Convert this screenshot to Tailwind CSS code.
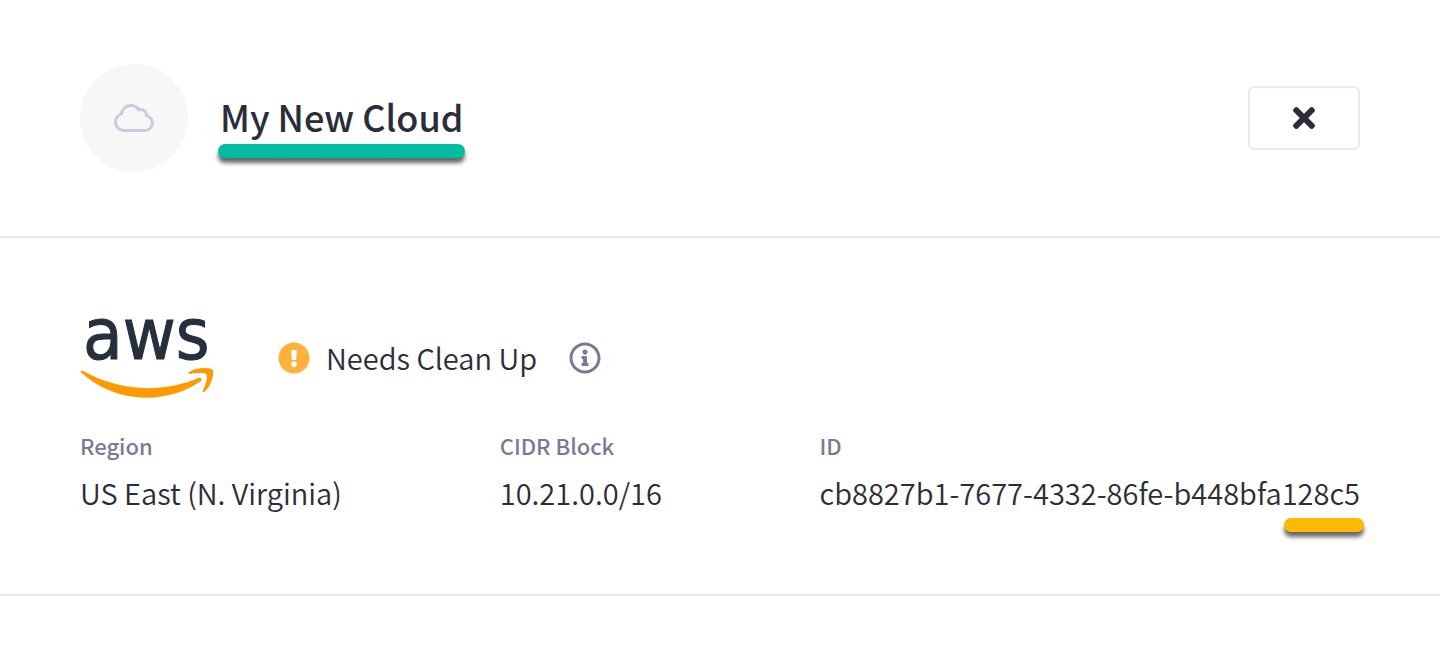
<!DOCTYPE html>
<html lang="en">
<head>
<meta charset="utf-8">
<meta name="viewport" content="width=device-width, initial-scale=1">
<title>My New Cloud</title>
<script src="https://cdn.jsdelivr.net/npm/@tailwindcss/browser@4"></script>
</head>
<body class="min-h-screen bg-white font-['Noto_Sans_CJK_SC','Noto_Sans',sans-serif] text-[#2b2d39]">
<header class="flex items-center gap-8 border-b-2 border-[#e9eaf1] px-20 py-16">
  <div class="flex size-27 shrink-0 items-center justify-center rounded-full bg-[#f7f7f7]">
    <svg class="h-8 w-10" viewBox="0 0 640 512" aria-hidden="true">
      <path d="M272 80c53.473 0 99.279 32.794 118.426 79.363C401.611 149.793 416.125 144 432 144c35.346 0 64 28.654 64 64 0 11.829-3.222 22.9-8.817 32.407A96.998 96.998 0 0 1 496 240c53.019 0 96 42.981 96 96s-42.981 96-96 96H160c-61.856 0-112-50.144-112-112 0-56.072 41.172-102.53 94.956-110.745C144.19 137.596 201.508 80 272 80z" fill="#f7f7f7" stroke="#c8cbe4" stroke-width="96" stroke-linejoin="round" paint-order="stroke"/>
    </svg>
  </div>
  <h1 class="relative pb-1 text-[36px] leading-12 font-medium">My New Cloud
    <span class="absolute top-full -right-0.5 -left-0.5 h-3.5 rounded-[7px] bg-[#00bda1] shadow-[0_5px_4px_rgba(0,0,0,0.6)]"></span>
  </h1>
  <button type="button" aria-label="Close" class="ml-auto flex h-16 w-28 items-center justify-center rounded-md border-2 border-[#e9eaf1] bg-white">
    <svg class="h-8 w-[22px]" viewBox="0 0 352 512" fill="currentColor" aria-hidden="true"><path d="M242.72 256l100.07-100.07c12.28-12.28 12.28-32.19 0-44.48l-22.24-22.24c-12.28-12.28-32.19-12.28-44.48 0L176 189.28 75.93 89.21c-12.28-12.28-32.19-12.28-44.48 0L9.21 111.45c-12.28 12.28-12.28 32.19 0 44.48L109.28 256 9.21 356.07c-12.28 12.28-12.28 32.19 0 44.48l22.24 22.24c12.28 12.28 32.2 12.28 44.48 0L176 322.72l100.07 100.07c12.28 12.28 32.2 12.28 44.48 0l22.24-22.24c12.28-12.28 12.28-32.19 0-44.48L242.72 256z"/></svg>
  </button>
</header>
<main class="border-b-2 border-[#e9eaf1] px-20 pt-20 pb-[82px]">
  <div class="flex items-center">
    <svg class="h-20 w-[134px] overflow-visible" viewBox="0 0 134 80" role="img" aria-label="aws">
      <text x="3" y="41" font-family="DejaVu Sans Condensed, Open Sans, sans-serif" font-size="72" fill="#252f3e" stroke="#252f3e" stroke-width="1">aws</text>
      <g transform="scale(.4408)" fill="#f90">
        <path d="M273.5,143.7c-32.9,24.3-80.7,37.2-121.8,37.2c-57.6,0-109.5-21.3-148.7-56.7c-3.1-2.8-0.3-6.6,3.4-4.4c42.4,24.6,94.7,39.5,148.8,39.5c36.5,0,76.6-7.6,113.5-23.2C274.2,133.6,278.9,139.7,273.5,143.7z"/>
        <path d="M287.2,128.1c-4.2-5.4-27.8-2.6-38.5-1.3c-3.2,0.4-3.7-2.4-0.8-4.5c18.8-13.2,49.7-9.4,53.3-5c3.6,4.5-1,35.4-18.6,50.2c-2.7,2.3-5.3,1.1-4.1-1.9C282.5,155.7,291.4,133.4,287.2,128.1z"/>
      </g>
    </svg>
    <svg class="ml-16 size-8" viewBox="0 0 512 512" fill="#ffb13d" aria-hidden="true"><path d="M504 256c0 136.997-111.043 248-248 248S8 392.997 8 256C8 119.083 119.043 8 256 8s248 111.083 248 248zm-248 50c-25.405 0-46 20.595-46 46s20.595 46 46 46 46-20.595 46-46-20.595-46-46-46zm-43.673-165.346l7.418 136c.347 6.364 5.609 11.346 11.982 11.346h48.546c6.373 0 11.635-4.982 11.982-11.346l7.418-136c.375-6.874-5.098-12.654-11.982-12.654h-63.383c-6.884 0-12.356 5.78-11.981 12.654z"/></svg>
    <span class="ml-4 pb-0.5 text-[29px] leading-10 font-[350]">Needs Clean Up</span>
    <button type="button" aria-label="More information" class="ml-8">
      <svg class="size-8" viewBox="0 0 512 512" fill="#787b94" aria-hidden="true"><path d="M256 8C119.043 8 8 119.083 8 256c0 136.997 111.043 248 248 248s248-111.003 248-248C504 119.083 392.957 8 256 8zm0 448c-110.532 0-200-89.431-200-200 0-110.495 89.472-200 200-200 110.491 0 200 89.471 200 200 0 110.53-89.431 200-200 200zm0-338c23.196 0 42 18.804 42 42s-18.804 42-42 42-42-18.804-42-42 18.804-42 42-42zm56 254c0 6.627-5.373 12-12 12h-88c-6.627 0-12-5.373-12-12v-24c0-6.627 5.373-12 12-12h12v-64h-12c-6.627 0-12-5.373-12-12v-24c0-6.627 5.373-12 12-12h64c6.627 0 12 5.373 12 12v100h12c6.627 0 12 5.373 12 12v24z"/></svg>
    </button>
  </div>
  <dl class="mt-7 grid grid-cols-[21fr_16fr_27fr]">
    <div>
      <dt class="text-[22px] leading-[38px] font-medium text-[#787b94]">Region</dt>
      <dd class="mt-2 text-[29px] leading-10 font-[350]">US East (N. Virginia)</dd>
    </div>
    <div>
      <dt class="text-[22px] leading-[38px] font-medium text-[#787b94]">CIDR Block</dt>
      <dd class="mt-2 text-[29px] leading-10 font-[350]">10.21.0.0/16</dd>
    </div>
    <div>
      <dt class="text-[22px] leading-[38px] font-medium text-[#787b94]">ID</dt>
      <dd class="mt-2 text-[29px] leading-10 font-[350] whitespace-nowrap">cb8827b1-7677-4332-86fe-b448bfa<span class="relative">128c5<span class="absolute top-full -right-1 left-0.5 mt-[5px] h-3.5 rounded-[7px] bg-[#fcb900] shadow-[0_5px_4px_rgba(0,0,0,0.6)]"></span></span></dd>
    </div>
  </dl>
</main>
</body>
</html>
